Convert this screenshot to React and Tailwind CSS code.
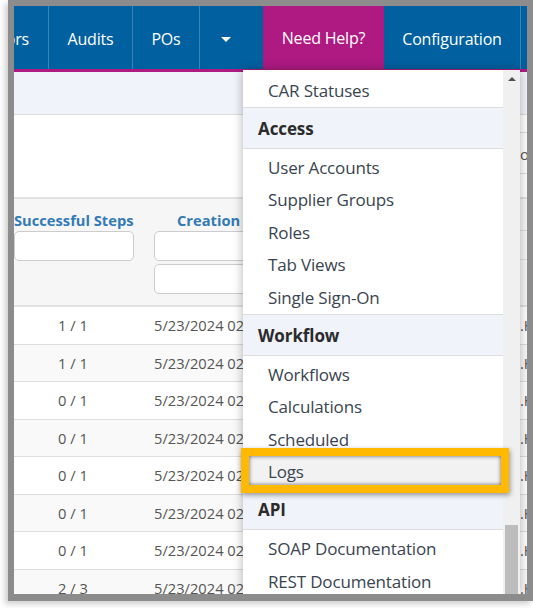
const navItems = [
  { label: "Errors", width: "w-[35px]", align: "justify-end pr-[19px]" },
  { label: "Audits", width: "w-[84px]", align: "justify-center" },
  { label: "POs", width: "w-[67px]", align: "justify-center" },
];

const menuSections = [
  { items: ["CAR Statuses"] },
  { title: "Access", items: ["User Accounts", "Supplier Groups", "Roles", "Tab Views", "Single Sign-On"] },
  { title: "Workflow", items: ["Workflows", "Calculations", "Scheduled", "Logs"] },
  { title: "API", items: ["SOAP Documentation", "REST Documentation"] },
];

const rows = ["1 / 1", "1 / 1", "0 / 1", "0 / 1", "0 / 1", "0 / 1", "0 / 1", "2 / 3"];

const Menu = () => (
  <div className="absolute left-[229px] top-[64px] w-[277px] h-[524px] flex overflow-hidden bg-white shadow-[0_0_10px_rgba(0,0,0,0.3)]">
    <div className="w-[260px] shrink-0">
      {menuSections.map((section, i) => (
        <div key={i}>
          {section.title && (
            <div className="h-[42px] flex items-center pl-[15px] pt-[1px] bg-[#f0f3fa] border-y border-[#dddddd] text-[17px] font-bold tracking-[-0.1px] text-[#2b2b2b]">
              {section.title}
            </div>
          )}
          <div className={section.title ? "pt-[2.5px]" : "pt-[4.25px]"}>
            {section.items.map((item) => (
              <div
                key={item}
                className={`h-[32.5px] flex items-center pl-[25px] text-[17px] tracking-[-0.17px] text-[#3a4450] ${
                  item === "Logs" ? "bg-[#f2f2f2]" : ""
                }`}
              >
                {item}
              </div>
            ))}
          </div>
        </div>
      ))}
    </div>
    <div className="w-[17px] bg-[#f0f0f0] flex flex-col items-center pt-[7px]">
      <div className="w-0 h-0 border-x-[4px] border-x-transparent border-b-[4px] border-b-[#505050]" />
      <div className="mt-[444px] w-[13px] h-[80px] bg-[#bdbdbd]" />
    </div>
  </div>
);

export default function App() {
  return (
    <div className="relative w-[533px] h-[608px] bg-white overflow-hidden font-['Open_Sans',sans-serif]">
      <div className="relative ml-2 w-[525px] h-[601px] border-[6px] border-b-[7px] border-[#8c8c8c] bg-white shadow-[-3px_3px_6px_rgba(0,0,0,0.2)] overflow-hidden flex flex-col">
        {/* top nav */}
        <div className="h-[66px] shrink-0 flex bg-[#0060a0] border-b-[3px] border-[#ae1a82] text-white text-[16px] tracking-[-0.2px]">
          {navItems.map((n) => (
            <div
              key={n.label}
              className={`${n.width} shrink-0 flex items-center overflow-hidden whitespace-nowrap pt-[2px] border-r border-[#3d83b5] ${n.align}`}
            >
              {n.label}
            </div>
          ))}
          <div className="w-[63px] shrink-0 flex items-center pl-[21px] pt-[3px]">
            <div className="w-0 h-0 border-x-[5px] border-x-transparent border-t-[5px] border-t-white" />
          </div>
          <div className="w-[121px] shrink-0 h-[64px] flex items-center justify-center bg-[#ae1a82]">Need Help?</div>
          <div className="w-[137px] shrink-0 flex items-center justify-center pt-[2px] border-r border-[#3d83b5]">
            Configuration
          </div>
        </div>

        <div className="h-[43px] shrink-0 bg-[#f0f3fa] border-b border-[#dddddd]" />

        <div className="h-[82px] shrink-0 bg-white flex justify-end">
          <div className="w-[7px] overflow-hidden">
            <div className="h-[18px] border-b border-[#dddddd]" />
            <div className="h-[41px] pt-[11px] border-b border-[#dddddd] text-[15px] leading-[20px] text-[#555555]">o</div>
          </div>
        </div>

        {/* table head */}
        <div className="h-[110px] shrink-0 flex bg-[#f6f6f6] border-y-2 border-[#e2e2e2]">
          <div className="w-[120px] shrink-0 pt-[12px]">
            <div className="text-[14.7px] font-bold text-[#337ab7] leading-[18px] whitespace-nowrap">Successful Steps</div>
            <div className="mt-[2px] h-[30px] bg-white border border-[#cccccc] rounded-[5px]" />
          </div>
          <div className="ml-[20px] w-[120px] shrink-0 pt-[12px]">
            <div className="text-[14.7px] font-bold text-[#337ab7] leading-[18px] pl-[23px]">Creation</div>
            <div className="mt-[2px] h-[30px] bg-white border border-[#cccccc] rounded-[5px]" />
            <div className="mt-[3px] h-[30px] bg-white border border-[#cccccc] rounded-[5px]" />
          </div>
          <div className="ml-auto w-[7px]">
            <div className="h-[32px] border-b border-[#dddddd]" />
            <div className="h-[29px] border-b border-[#dddddd]" />
          </div>
        </div>

        {/* rows */}
        {rows.map((steps, i) => (
          <div
            key={i}
            className={`h-[37.5px] shrink-0 flex items-center border-b border-[#dddddd] text-[14.7px] text-[#555555] ${
              i % 2 ? "bg-[#f9f9f9]" : "bg-white"
            }`}
          >
            <div className="w-[140px] shrink-0 pl-[44px]">{steps}</div>
            <div className="w-[89px] shrink-0 overflow-hidden whitespace-nowrap">5/23/2024 02:14 PM</div>
            <div className="ml-auto w-[7px] overflow-hidden whitespace-nowrap">.H</div>
          </div>
        ))}

        <Menu />
      </div>

      {/* callout around Logs */}
      <div className="absolute left-[241px] top-[448px] w-[268px] h-[45px] border-[8px] border-[#ffb900] shadow-[1px_2px_5px_rgba(0,0,0,0.4),inset_0_0_4px_rgba(0,0,0,0.6)]" />
    </div>
  );
}
